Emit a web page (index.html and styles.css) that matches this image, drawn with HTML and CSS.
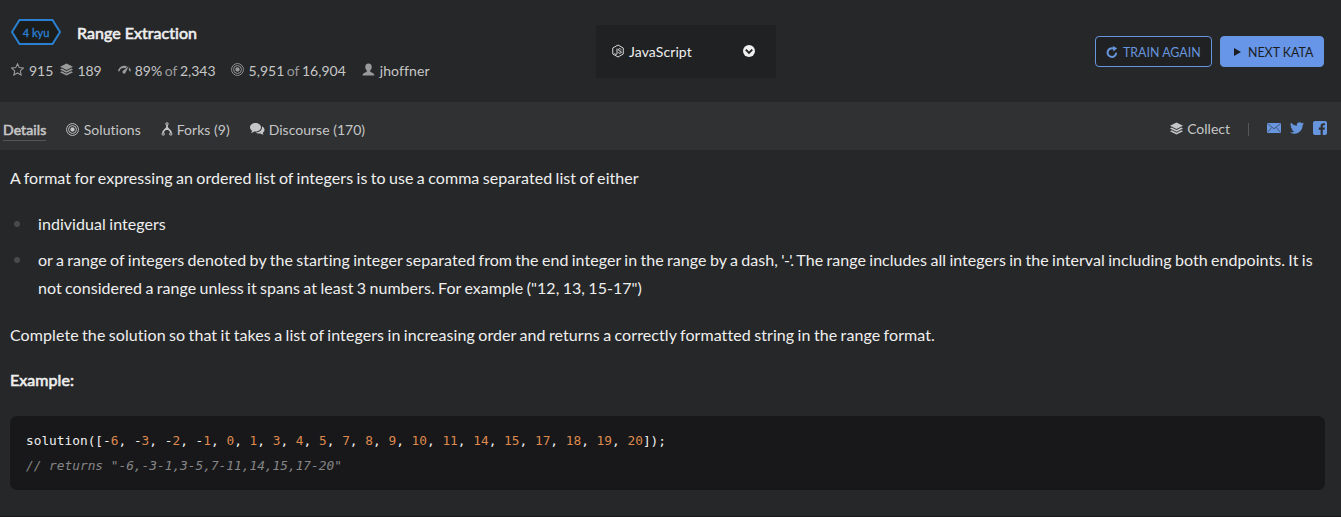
FILE: index.html
```html
<!DOCTYPE html>
<html lang="en">
<head>
<meta charset="utf-8">
<title>Range Extraction</title>
<link rel="stylesheet" href="styles.css">
</head>
<body>
<svg class="defs" width="0" height="0">
  <symbol id="layers" viewBox="0 0 24 24"><path d="M12 1 24 7 12 13 0 7z"/><path d="M3 10.2 12 14.700 21 10.200 24 12 12 18 0 12z"/><path d="M3 15.200 12 19.700 21 15.200 24 17 12 23 0 17z"/></symbol>
  <symbol id="target" viewBox="0 0 24 24"><g fill="none" stroke="currentColor" stroke-width="1.700"><circle cx="12" cy="12" r="11"/><circle cx="12" cy="12" r="7.300"/></g><circle cx="12" cy="12" r="4"/></symbol>
</svg>
<header class="header">
  <section class="kata">
    <div class="title-row">
      <div class="rank"><svg viewBox="0 0 50 26"><path d="M8.500 1h33L49 13l-7.500 12h-33L1 13z" fill="#1b1d1d" stroke="#2a7fd0" stroke-width="2"/></svg><span>4 kyu</span></div>
      <h1>Range Extraction</h1>
    </div>
    <div class="stats">
      <span class="stat stars"><svg class="i13" viewBox="0 0 24 24"><path d="M12 1.500l3.200 7 7.700.9-5.700 5.200 1.500 7.600-6.700-3.800-6.700 3.800 1.500-7.600-5.700-5.200 7.700-.9z" fill="none" stroke="currentColor" stroke-width="2"/></svg>915</span>
      <span class="stat collected"><svg class="i13"><use href="#layers"/></svg>189</span>
      <span class="stat rate"><svg class="i13" viewBox="0 0 24 24"><path d="M0 15C1 9 6 5 12 5c2 0 3.500.4 5 1l-3 3.500C8 8 4 10 3 15z"/><path d="M20 6l-6.500 12.500a3 3 0 0 1-4.500-4z"/><path d="M21 8.500c1.700 1.700 2.700 4 3 6.500h-3c-.2-1.500-.8-2.700-1.500-3.600z"/></svg><b>89%</b> <i>of</i> <b>2,343</b></span>
      <span class="stat done"><svg class="i13"><use href="#target"/></svg><b>5,951</b> <i>of</i> <b>16,904</b></span>
      <span class="stat author"><svg class="i13" viewBox="0 0 24 24"><path d="M12 1c4 0 6 2.700 6 6.500 0 3-1.200 5-2.800 6.500v2c1.500 1.500 7.800 2 7.800 7H1c0-5 6.300-5.500 7.800-7v-2C7.200 12.500 6 10.500 6 7.500 6 3.700 8 1 12 1z"/></svg>jhoffner</span>
    </div>
  </section>
  <div class="language">
    <svg class="node" viewBox="0 0 24 26"><g fill="none" stroke="currentColor" stroke-width="1.900"><path d="M12 1l10.500 6v12L12 25 1.500 19V7z"/><path d="M10 8v10q0 2-2 2l-3-1.800"/><path d="M18.500 10q-1-1.700-3-1.700-2.700 0-2.700 2.200 0 2 3 2.400 3 .4 3 2.400 0 2.300-3 2.300-2.700 0-3.300-2"/></g></svg>
    <span>JavaScript</span>
    <svg class="chevron" viewBox="0 0 12 12"><circle cx="6" cy="6" r="6"/><path d="M2.800 4.700 6 7.900l3.200-3.200" fill="none" stroke="#202123" stroke-width="1.900"/></svg>
  </div>
  <div class="actions">
    <a class="btn outline"><svg viewBox="0 0 12 12"><path d="M10.200 6.800A4.300 4.300 0 1 1 7.500 2.600" fill="none" stroke="currentColor" stroke-width="2"/><path d="M6.800 0 11.200 2.200 7.400 5.400z"/></svg>TRAIN AGAIN</a>
    <a class="btn solid"><svg viewBox="0 0 12 12"><path d="M3 2 10 6 3 10z"/></svg>NEXT KATA</a>
  </div>
</header>
<nav class="tabs">
  <a class="tab active">Details</a>
  <a class="tab solutions"><svg class="i13"><use href="#target"/></svg>Solutions</a>
  <a class="tab forks"><svg class="fork" viewBox="0 0 12 14"><g fill="none" stroke="currentColor" stroke-width="1"><circle cx="6" cy="1.900" r="1.200"/><circle cx="2.200" cy="12" r="1.200"/><circle cx="9.800" cy="12" r="1.200"/></g><path d="M6 3v3.200M6 5.500C5 7.500 2 8 2 11M6 5.500c1 2 4 2.500 4 5.500" fill="none" stroke="currentColor" stroke-width="1.700"/></svg>Forks (9)</a>
  <a class="tab discourse"><svg class="chat" viewBox="0 0 15 12"><path d="M5.500 0C8.600 0 11 1.900 11 4.300S8.600 8.600 5.500 8.600l-1.300-.1Q2.800 9.700 1 9.800q1-.9 1-2.100C.8 6.900 0 5.700 0 4.300 0 1.900 2.400 0 5.500 0z"/><path d="M12 3.200c1.500.7 2.500 2 2.500 3.500 0 1.200-.6 2.200-1.700 3 0 .9.400 1.500 1 2-1.500 0-2.500-.5-3.300-1.200-2 .3-4-.2-5-1C9.500 9.500 12 7 12 4.500z"/></svg>Discourse (170)</a>
  <div class="share">
    <a class="collect"><svg class="i13"><use href="#layers"/></svg>Collect</a>
    <span class="divider"></span>
    <svg class="mail" viewBox="0 0 14 10"><path d="M0 0h14v10H0z"/><path d="M.3.500 7 5.800 13.700.5M.4 9.500l4.300-5M13.600 9.500l-4.300-5" fill="none" stroke="#303133" stroke-width=".6"/></svg>
    <svg class="bird" viewBox="0 0 24 20"><path d="M24 2.400a10 10 0 0 1-2.800.8A5 5 0 0 0 23.300.5a10 10 0 0 1-3.100 1.200 4.900 4.900 0 0 0-8.400 4.500A14 14 0 0 1 1.700 1a4.900 4.900 0 0 0 1.500 6.600A5 5 0 0 1 1 7v.1a4.900 4.900 0 0 0 4 4.800 5 5 0 0 1-2.200.1 4.900 4.900 0 0 0 4.600 3.400A10 10 0 0 1 0 17.500a14 14 0 0 0 7.500 2.200c9.100 0 14-7.500 14-14v-.6A10 10 0 0 0 24 2.400z"/></svg>
    <svg class="facebook" viewBox="0 0 14 14"><path d="M2 0h10q2 0 2 2v10q0 2-2 2H9.800V8.700h1.800l.3-2.100H9.800V5.200q0-1 1-1H12V2.300h-1.600q-2.800 0-2.800 2.800v1.500H5.800v2.100h1.800V14H2q-2 0-2-2V2Q0 0 2 0z"/></svg>
  </div>
</nav>
<main class="description">
  <p>A format for expressing an ordered list of integers is to use a comma separated list of either</p>
  <ul>
    <li>individual integers</li>
    <li class="long">or a range of integers denoted by the starting integer separated from the end integer in the range by a dash, <span class="dash">'-'.</span> The range includes all integers in the interval including both endpoints. It is<br>not considered a range unless it spans at least 3 numbers. For example ("12, 13, 15-17")</li>
  </ul>
  <p class="task">Complete the solution so that it takes a list of integers in increasing order and returns a correctly formatted string in the range format.</p>
  <p class="example">Example:</p>
<pre><code>solution([-<b>6</b>, -<b>3</b>, -<b>2</b>, -<b>1</b>, <b>0</b>, <b>1</b>, <b>3</b>, <b>4</b>, <b>5</b>, <b>7</b>, <b>8</b>, <b>9</b>, <b>10</b>, <b>11</b>, <b>14</b>, <b>15</b>, <b>17</b>, <b>18</b>, <b>19</b>, <b>20</b>]);
<i>// returns "-6,-3-1,3-5,7-11,14,15,17-20"</i></code></pre>
</main>
</body>
</html>
```
FILE: styles.css
```css
* { box-sizing: border-box; }
body { margin: 0; height: 517px; overflow: hidden; background: #262729; color: #efefef; font-family: Lato, sans-serif; font-size: 16px; font-variant-ligatures: none; border-bottom: 1px solid #18181a; }
svg { display: block; flex: none; fill: currentColor; }
.defs { position: absolute; }
.i13 { width: 13px; height: 13px; }
.header { height: 102px; display: flex; align-items: flex-start; white-space: nowrap; }
.kata { width: 596px; padding: 19px 0 0 11px; }
.title-row { display: flex; align-items: center; height: 26px; gap: 16px; }
.rank { display: grid; width: 50px; height: 26px; color: #2a7fd0; font-size: 11px; }
.rank > * { grid-area: 1 / 1; }
.rank svg { width: 50px; height: 26px; }
.rank span { place-self: center; z-index: 1; -webkit-text-stroke: .35px; }
h1 { margin: 2px 0 0; font-size: 16px; font-weight: 400; line-height: 24px; letter-spacing: .04px; -webkit-text-stroke: .6px; }
.stats { display: flex; align-items: center; height: 20px; margin-top: 15px; font-size: 14px; color: #c5c6c6; }
.stat { display: flex; align-items: center; white-space: pre; }
.stat svg { color: #999a9a; margin: -2px 5px 0 0; }
.stat b { font-weight: 400; }
.stat i { font-style: normal; color: #999a9a; margin: 0 2.500px; }
.collected { margin-left: 7px; }
.collected svg { margin-right: 4px; }
.rate { margin-left: 16px; }
.rate svg { margin-right: 4px; }
.done { margin-left: 15px; }
.done svg { margin-right: 5px; }
.author { margin-left: 16px; letter-spacing: .1px; }
.language { display: flex; align-items: center; width: 180px; height: 53px; margin-top: 25px; padding: 0 21px 0 16px; background: #202123; font-size: 14px; letter-spacing: .1px; }
.node { width: 12px; height: 14px; margin: -2px 5px 0 0; color: #e0e0e0; }
.chevron { width: 12px; height: 12px; margin: -2px 0 0 auto; }
.actions { display: flex; gap: 8px; margin: 36px 17px 0 auto; }
.btn { display: flex; align-items: center; height: 31px; padding: 2px 10px 0; border: 1px solid #6795de; border-radius: 4px; font-size: 12.400px; }
.btn svg { width: 12px; height: 12px; margin: -2px 5px 0 0; }
.outline { width: 117px; color: #6795de; background: #202123; }
.solid { width: 104px; color: #1b1d20; background: #6795e8; }
.tabs { height: 48px; display: flex; align-items: flex-start; padding: 19px 14px 0 3px; background: #303133; color: #c5c6c6; font-size: 14px; line-height: 18px; white-space: nowrap; }
.tab { display: flex; align-items: center; height: 18px; letter-spacing: .02px; }
.tab svg { margin: -2px 4px 0 0; }
.active { height: 20px; padding-bottom: 2px; border-bottom: 1px solid #555657; letter-spacing: .1px; -webkit-text-stroke: .6px; }
.solutions { margin-left: 20px; }
.solutions svg { margin-right: 4.500px; }
.forks { margin-left: 20px; }
.fork { width: 12px; height: 14px; }
.discourse { margin-left: 20px; }
.chat { width: 15px; height: 12px; }
.share { display: flex; align-items: center; height: 16px; margin-left: auto; color: #6795de; }
.collect { display: flex; align-items: center; color: #c5c6c6; }
.collect svg { margin: -1px 4px 0 0; }
.divider { width: 1px; height: 13px; margin: 0 18px; background: #555657; }
.mail { width: 14px; height: 10px; margin: -2px 9px 0 0; }
.bird { width: 14px; height: 12px; margin: -2px 9px 0 0; }
.facebook { width: 14px; height: 14px; margin-top: -2px; }
.description { padding: 14px 16px 0 10px; line-height: 28px; word-spacing: -.8px; letter-spacing: .06px; }
p { margin: 0; }
ul { list-style: none; margin: 18px 0 19px; padding: 0; }
li { display: block; padding-left: 28px; margin-bottom: 8px; white-space: nowrap; background: radial-gradient(circle at 7px 14px, #48494b 2.600px, transparent 3.400px); }
.long { letter-spacing: .045px; }
.dash { letter-spacing: -.6px; }
.task { letter-spacing: .08px; }
.example { margin-top: 17px; -webkit-text-stroke: .6px; }
pre { margin: 22px 0 0; height: 74px; padding: 12px 16px; border-radius: 7px; background: #18181a; font: 12.800px/25px "DejaVu Sans Mono", monospace; word-spacing: 0; letter-spacing: 0; }
code { font: inherit; }
pre b { font-weight: 400; color: #de8a4e; }
pre i { color: #858687; }
```
